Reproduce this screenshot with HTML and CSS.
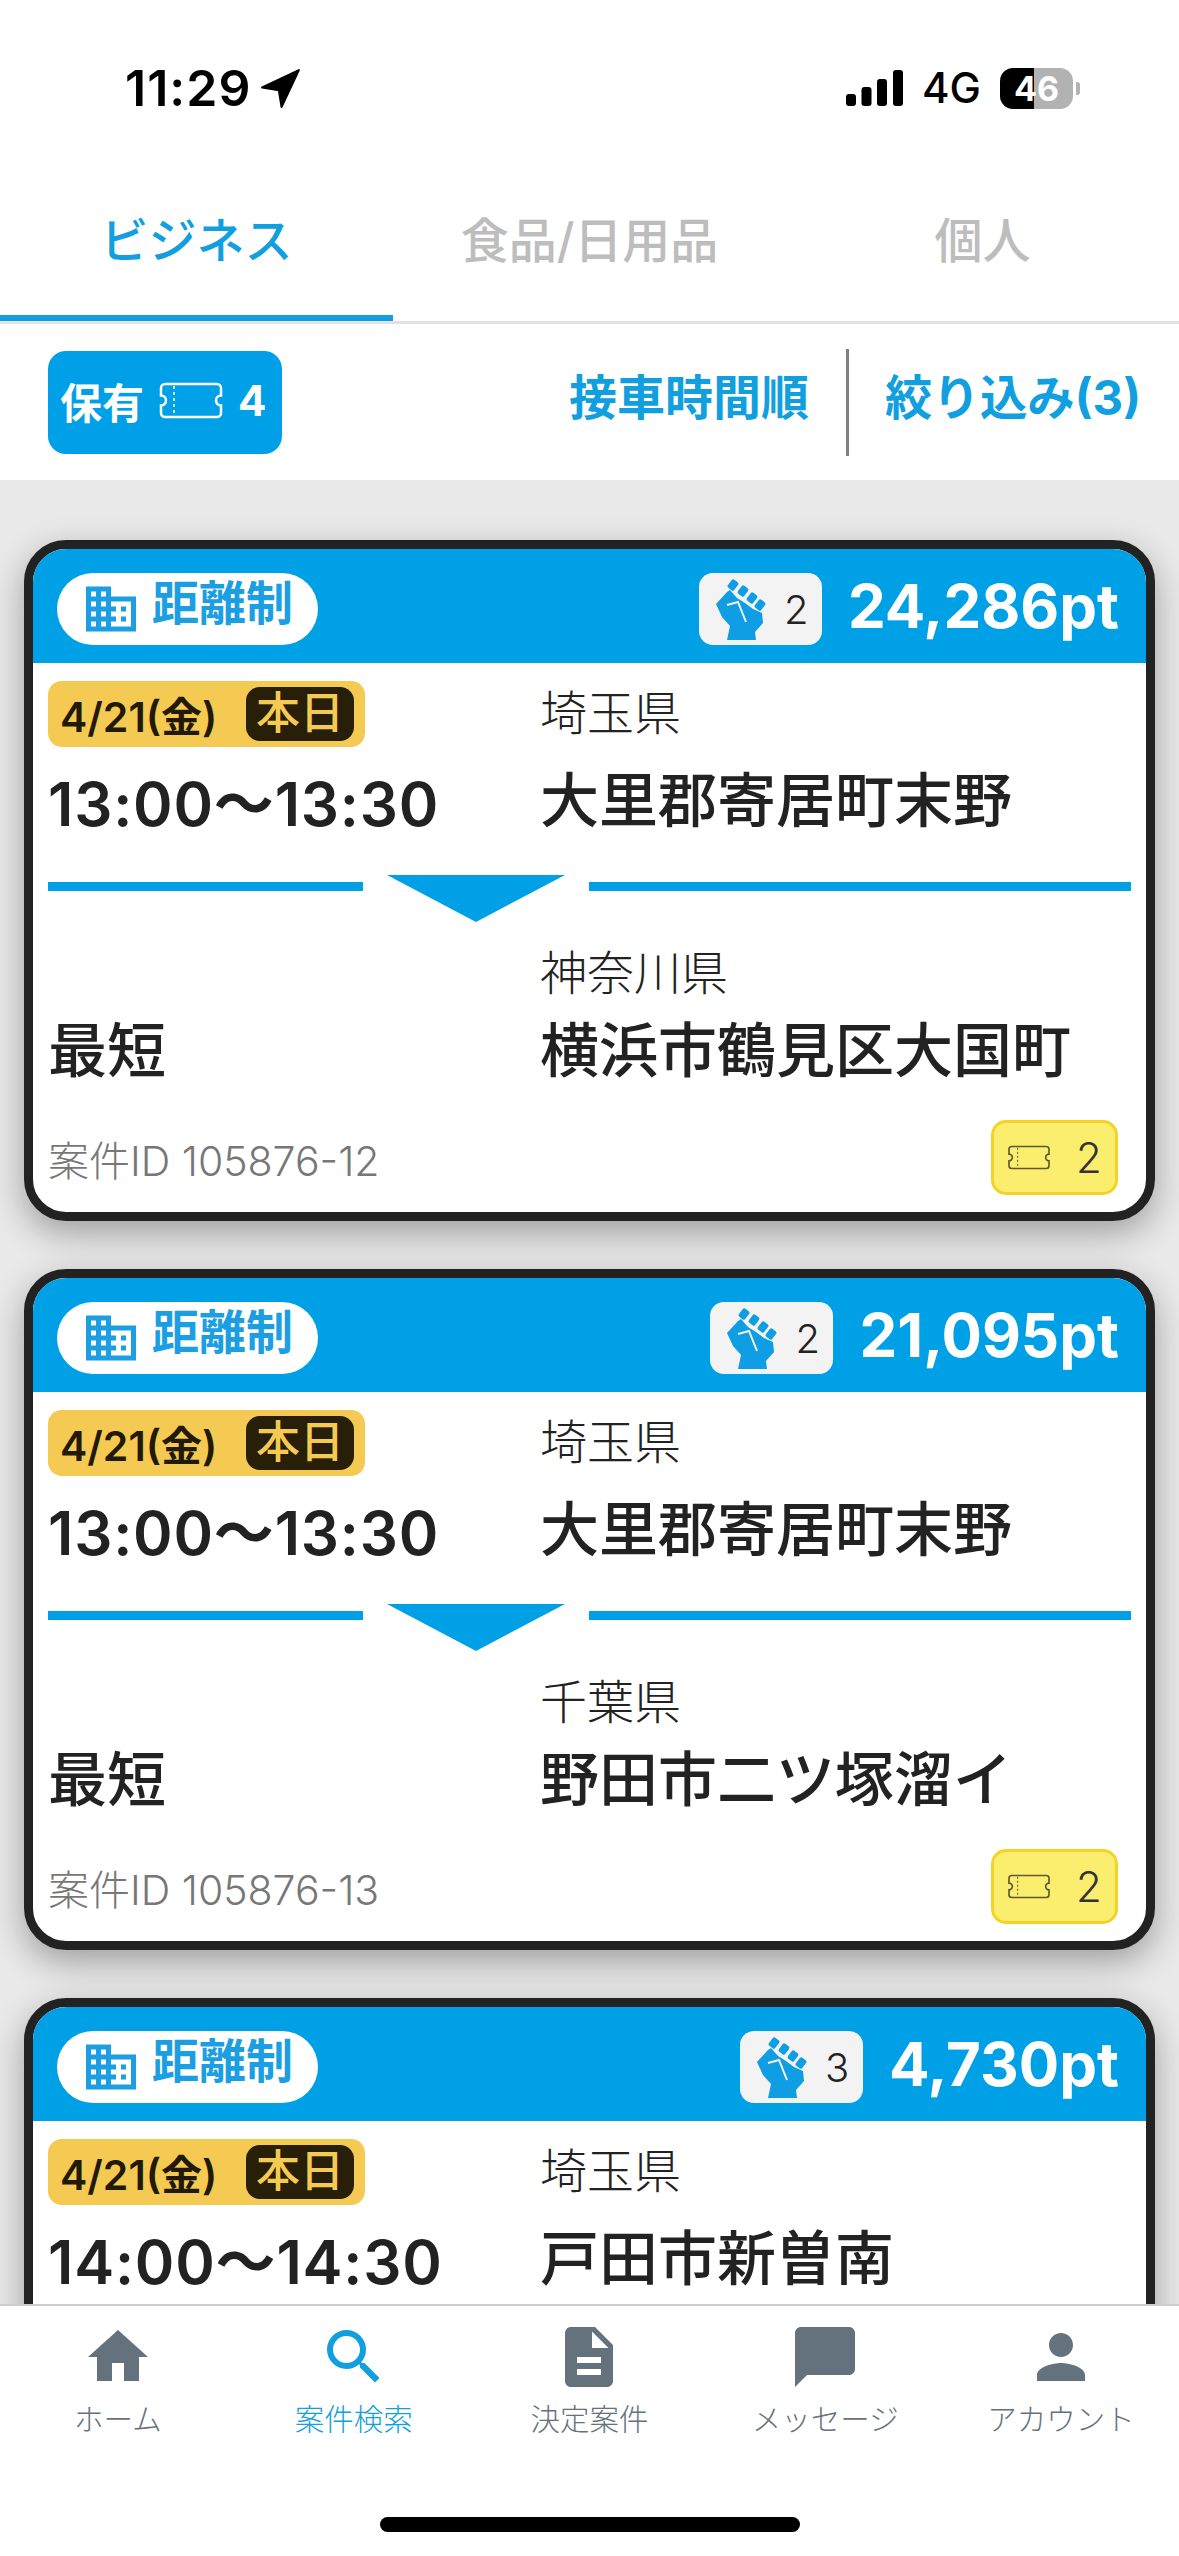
FILE: index.html
```html
<!DOCTYPE html>
<html lang="ja">
<head>
<meta charset="utf-8">
<title>案件検索</title>
<link rel="stylesheet" href="styles.css">
</head>
<body>
<svg class="defs" width="0" height="0" aria-hidden="true">
  <defs>
    <symbol id="ticket" viewBox="0 0 66 37">
      <path d="M7 2h52a4 4 0 0 1 4 4v7.500a5 5 0 0 0 0 10V31a4 4 0 0 1-4 4H7a4 4 0 0 1-4-4v-7.500a5 5 0 0 0 0-10V6a4 4 0 0 1 4-4z" fill="none" stroke="currentColor" stroke-width="2.500"/>
      <path d="M16 4v29" fill="none" stroke="currentColor" stroke-width="1.500" stroke-dasharray="3 3"/>
    </symbol>
    <symbol id="fist" viewBox="0 0 50 61">
      <g fill="currentColor">
        <rect x="13" y="1" width="8" height="10" rx="2" transform="rotate(37 17 6)"/>
        <rect x="23" y="7" width="8" height="10" rx="2" transform="rotate(37 27 12)"/>
        <rect x="32" y="14" width="8" height="10" rx="2" transform="rotate(37 36 19)"/>
        <rect x="40" y="21" width="8" height="10" rx="2" transform="rotate(37 44 26)"/>
        <path d="M0 25 11 13l3-2 7 8 8 5 8 6 9 4 1 10-8 9 1 8H11l3-14-8-9z"/>
      </g>
      <path d="M11 26l11-3 8 20" fill="none" stroke="#f3f3f3" stroke-width="2"/>
    </symbol>
    <symbol id="building" viewBox="0 0 24 24">
      <path fill="currentColor" d="M12 7V3H2v18h20V7H12zM6 19H4v-2h2v2zm0-4H4v-2h2v2zm0-4H4V9h2v2zm0-4H4V5h2v2zm4 12H8v-2h2v2zm0-4H8v-2h2v2zm0-4H8V9h2v2zm0-4H8V5h2v2zm10 12h-8v-2h2v-2h-2v-2h2v-2h-2V9h8v10zm-2-8h-2v2h2v-2zm0 4h-2v2h2v-2z"/>
    </symbol>
  </defs>
</svg>

<div class="app">
  <header class="status">
    <div class="status-left">
      <span class="clock">11:29</span>
      <svg class="loc" viewBox="0 0 38 38"><path fill="currentColor" stroke="currentColor" stroke-width="2" stroke-linejoin="round" d="M36 2 2 18l15.500 2.500L20 36z"/></svg>
    </div>
    <div class="status-right">
      <svg class="signal" viewBox="0 0 57 36"><g fill="currentColor"><rect x="0" y="24" width="10" height="12" rx="3"/><rect x="15.500" y="17" width="10" height="19" rx="3"/><rect x="31" y="9" width="10" height="27" rx="3"/><rect x="47" y="0" width="10" height="36" rx="3"/></g></svg>
      <span class="net">4G</span>
      <span class="battery">46</span>
      <span class="nub"></span>
    </div>
  </header>

  <nav class="tabs">
    <a class="tab active">ビジネス</a>
    <a class="tab">食品/日用品</a>
    <a class="tab">個人</a>
  </nav>

  <section class="filters">
    <div class="owned">保有<svg class="ticket-lg"><use href="#ticket"/></svg>4</div>
    <div class="filter-actions">
      <span class="sort">接車時間順</span>
      <span class="narrow">絞り込み(3)</span>
    </div>
  </section>

  <main class="list">
    <article class="card">
      <div class="card-head">
        <div class="kind"><svg class="bldg"><use href="#building"/></svg>距離制</div>
        <div class="head-right">
          <div class="power"><svg class="fist"><use href="#fist"/></svg>2</div>
          <div class="pts">24,286pt</div>
        </div>
      </div>
      <div class="leg first">
        <div class="cell"><div class="date">4/21(金)<span class="today">本日</span></div></div>
        <div class="pref">埼玉県</div>
        <div class="big time">13:00〜13:30</div>
        <div class="big">大里郡寄居町末野</div>
      </div>
      <div class="arrow"><i class="bar"></i><i class="tri"></i><i class="bar"></i></div>
      <div class="leg">
        <div class="cell"></div>
        <div class="pref">神奈川県</div>
        <div class="big">最短</div>
        <div class="big">横浜市鶴見区大国町</div>
      </div>
      <div class="foot">
        <span class="case-id">案件ID 105876-12</span>
        <span class="cost"><svg class="ticket-sm"><use href="#ticket"/></svg>2</span>
      </div>
    </article>

    <article class="card">
      <div class="card-head">
        <div class="kind"><svg class="bldg"><use href="#building"/></svg>距離制</div>
        <div class="head-right">
          <div class="power"><svg class="fist"><use href="#fist"/></svg>2</div>
          <div class="pts">21,095pt</div>
        </div>
      </div>
      <div class="leg first">
        <div class="cell"><div class="date">4/21(金)<span class="today">本日</span></div></div>
        <div class="pref">埼玉県</div>
        <div class="big time">13:00〜13:30</div>
        <div class="big">大里郡寄居町末野</div>
      </div>
      <div class="arrow"><i class="bar"></i><i class="tri"></i><i class="bar"></i></div>
      <div class="leg">
        <div class="cell"></div>
        <div class="pref">千葉県</div>
        <div class="big">最短</div>
        <div class="big">野田市二ツ塚溜イ</div>
      </div>
      <div class="foot">
        <span class="case-id">案件ID 105876-13</span>
        <span class="cost"><svg class="ticket-sm"><use href="#ticket"/></svg>2</span>
      </div>
    </article>

    <article class="card">
      <div class="card-head">
        <div class="kind"><svg class="bldg"><use href="#building"/></svg>距離制</div>
        <div class="head-right">
          <div class="power"><svg class="fist"><use href="#fist"/></svg>3</div>
          <div class="pts">4,730pt</div>
        </div>
      </div>
      <div class="leg first">
        <div class="cell"><div class="date">4/21(金)<span class="today">本日</span></div></div>
        <div class="pref">埼玉県</div>
        <div class="big time">14:00〜14:30</div>
        <div class="big">戸田市新曽南</div>
      </div>
    </article>
  </main>

  <footer class="bottom">
    <div class="nav-items">
      <a class="nav-item">
        <svg viewBox="0 0 24 24"><path fill="currentColor" d="M10 20v-6h4v6h5v-8h3L12 3 2 12h3v8z"/></svg>
        <span>ホーム</span>
      </a>
      <a class="nav-item current">
        <svg viewBox="0 0 24 24"><path fill="currentColor" d="M15.500 14h-.79l-.28-.27A6.471 6.471 0 0 0 16 9.500 6.500 6.500 0 1 0 9.500 16c1.610 0 3.090-.59 4.230-1.570l.27.28v.79l5 4.990L20.490 19l-4.990-5zm-6 0C7.010 14 5 11.990 5 9.500S7.010 5 9.500 5 14 7.010 14 9.500 11.990 14 9.500 14z"/></svg>
        <span>案件検索</span>
      </a>
      <a class="nav-item">
        <svg viewBox="0 0 24 24"><path fill="currentColor" d="M14 2H6c-1.100 0-1.990.9-1.990 2L4 20c0 1.100.89 2 1.990 2H18c1.100 0 2-.9 2-2V8l-6-6zm2 16H8v-2h8v2zm0-4H8v-2h8v2zm-3-5V3.500L18.500 9H13z"/></svg>
        <span>決定案件</span>
      </a>
      <a class="nav-item">
        <svg viewBox="0 0 24 24"><path fill="currentColor" d="M20 2H4c-1.100 0-1.990.9-1.990 2L2 22l4-4h14c1.100 0 2-.9 2-2V4c0-1.100-.9-2-2-2z"/></svg>
        <span>メッセージ</span>
      </a>
      <a class="nav-item">
        <svg viewBox="0 0 24 24"><path fill="currentColor" d="M12 12c2.210 0 4-1.790 4-4s-1.790-4-4-4-4 1.790-4 4 1.790 4 4 4zm0 2c-2.670 0-8 1.340-8 4v2h16v-2c0-2.660-5.330-4-8-4z"/></svg>
        <span>アカウント</span>
      </a>
    </div>
    <div class="home-bar"></div>
  </footer>
</div>
</body>
</html>
```

FILE: styles.css
```css
* { box-sizing: border-box; }
html, body { margin: 0; padding: 0; }
body {
  width: 1179px;
  height: 2556px;
  overflow: hidden;
  background: #fff;
  color: #222;
  font-family: Inter, "Noto Sans CJK JP", sans-serif;
}
.defs { position: absolute; }
.app {
  width: 1179px;
  height: 2556px;
  display: flex;
  flex-direction: column;
  overflow: hidden;
}

/* status bar */
.status {
  height: 190px;
  flex: none;
  padding: 60px 99px 0 125px;
  display: flex;
  justify-content: space-between;
  align-items: flex-start;
  color: #000;
}
.status-left { display: flex; align-items: center; height: 56px; gap: 9px; }
.clock { font-size: 50px; font-weight: 600; letter-spacing: 1px; line-height: 56px; }
.loc { width: 41px; height: 41px; }
.status-right { display: flex; align-items: center; height: 56px; }
.signal { width: 57px; height: 36px; margin-right: 19px; }
.net { font-size: 42px; font-weight: 500; line-height: 56px; margin-right: 19px; }
.battery {
  width: 73px;
  height: 41px;
  border-radius: 13px;
  background: linear-gradient(90deg, #000 47%, #b2b2b2 47%);
  color: #fff;
  font-size: 34px;
  font-weight: 700;
  line-height: 41px;
  text-align: center;
}
.nub { width: 4px; height: 13px; margin-left: 3px; border-radius: 0 3px 3px 0; background: #b2b2b2; }

/* tabs */
.tabs {
  height: 134px;
  flex: none;
  display: flex;
  border-bottom: 3px solid #e2e2e2;
}
.tab {
  flex: 1;
  text-align: center;
  font-size: 48px;
  font-weight: 500;
  line-height: 60px;
  padding-top: 21px;
  color: #bdbdbd;
  border-bottom: 6px solid transparent;
}
.tab.active { color: #129fe0; border-bottom-color: #129fe0; }

/* filter row */
.filters {
  height: 156px;
  flex: none;
  display: flex;
  justify-content: space-between;
  align-items: center;
  padding: 0 38px 0 48px;
  background: #fff;
}
.owned {
  width: 234px;
  height: 103px;
  border-radius: 18px;
  background: #00a0e9;
  color: #fff;
  font-size: 42px;
  font-weight: 700;
  display: flex;
  align-items: center;
  padding: 0 0 4px 12px;
  gap: 14px;
}
.ticket-lg { width: 66px; height: 37px; color: #fff; }
.filter-actions { display: flex; align-items: stretch; height: 107px; color: #129fe0; font-size: 48px; font-weight: 700; line-height: 97px; }
.sort { padding-right: 37px; border-right: 3px solid #808080; }
.narrow { padding-left: 36px; font-size: 47.400px; }

/* card list */
.list {
  flex: 1;
  min-height: 0;
  overflow: hidden;
  background: #e9e9e9;
  padding: 60px 24px 0;
  display: flex;
  flex-direction: column;
  gap: 48px;
}
.card {
  flex: none;
  min-height: 681px;
  border: 9px solid #222;
  border-radius: 42px;
  background: #fff;
  box-shadow: 0 12px 34px rgba(0, 0, 0, .32);
  overflow: hidden;
}
.card-head {
  height: 114px;
  background: #00a0e6;
  padding: 24px 27px 24px 24px;
  display: flex;
  justify-content: space-between;
}
.kind {
  width: 261px;
  height: 72px;
  border-radius: 36px;
  background: #fff;
  color: #1c9fe2;
  font-size: 47px;
  font-weight: 700;
  line-height: 60px;
  display: flex;
  align-items: flex-start;
  padding: 0 0 0 24px;
  gap: 11px;
}
.bldg { width: 60px; height: 60px; margin-top: 6px; }
.head-right { display: flex; align-items: flex-start; gap: 26px; }
.power {
  width: 123px;
  height: 72px;
  border-radius: 14px;
  background: #f3f3f3;
  color: #222;
  font-size: 40px;
  font-weight: 300;
  display: flex;
  align-items: center;
  padding: 0 0 0 17px;
  gap: 18px;
}
.fist { width: 50px; height: 61px; color: #0f9ee3; }
.pts { color: #fff; font-size: 60px; font-weight: 700; line-height: 66px; }

/* route rows */
.leg {
  display: grid;
  grid-template-columns: 492px 1fr;
  grid-template-rows: 66px 68px;
  row-gap: 10px;
  padding: 19px 15px 0;
  align-items: center;
}
.leg.first { padding-top: 18px; row-gap: 20px; }
.cell { height: 66px; }
.date {
  width: 317px;
  height: 66px;
  border-radius: 14px;
  background: #f5ca52;
  color: #221a05;
  font-size: 41px;
  font-weight: 600;
  display: flex;
  align-items: center;
  justify-content: space-between;
  padding: 0 11px 0 12px;
}
.today {
  width: 108px;
  height: 54px;
  border-radius: 14px;
  background: #271f08;
  color: #f5ca52;
  text-align: center;
  line-height: 52px;
  font-size: 44px;
  font-weight: 500;
}
.pref { font-size: 47px; font-weight: 300; line-height: 56px; color: #222; padding-bottom: 2px; }
.big { font-size: 59px; font-weight: 500; line-height: 68px; color: #222; white-space: nowrap; }
.time { font-size: 60px; font-weight: 600; letter-spacing: .8px; padding-top: 5px; }

.arrow {
  height: 47px;
  margin-top: 40px;
  padding: 0 15px;
  display: flex;
  justify-content: space-between;
  align-items: flex-start;
}
.bar { width: 315px; height: 9px; margin-top: 7px; background: #00a0e6; }
.bar:last-child { width: 542px; }
.tri {
  width: 178px;
  height: 47px;
  background: #00a0e6;
  clip-path: polygon(0 0, 100% 0, 50% 100%);
}

.foot {
  display: flex;
  justify-content: space-between;
  align-items: flex-start;
  padding: 35px 28px 0 15px;
}
.case-id { font-size: 41px; font-weight: 300; color: #777; line-height: 48px; margin-top: 17px; }
.cost {
  width: 127px;
  height: 75px;
  border-radius: 15px;
  background: #fbed6d;
  border: 3px solid #f3d426;
  display: flex;
  align-items: center;
  color: #333;
  font-size: 42px;
  font-weight: 300;
  padding-left: 13px;
  gap: 25px;
}
.ticket-sm { width: 44px; height: 25px; color: #5d5a33; }

/* bottom navigation */
.bottom {
  height: 252px;
  flex: none;
  background: #fff;
  border-top: 2px solid #cfcfcf;
  position: relative;
  z-index: 1;
  display: flex;
  flex-direction: column;
}
.nav-items { display: flex; padding: 15px 0 0; }
.nav-item {
  flex: 0 0 235.800px;
  display: flex;
  flex-direction: column;
  align-items: center;
  color: #64727e;
  font-weight: 300;
  font-size: 29.500px;
  line-height: 36px;
}
.nav-item svg { width: 72px; height: 72px; margin-bottom: 8px; }
.nav-item.current { color: #129fe0; }
.home-bar {
  width: 420px;
  height: 15px;
  margin: 80px auto 0;
  border-radius: 8px;
  background: #000;
}
```
